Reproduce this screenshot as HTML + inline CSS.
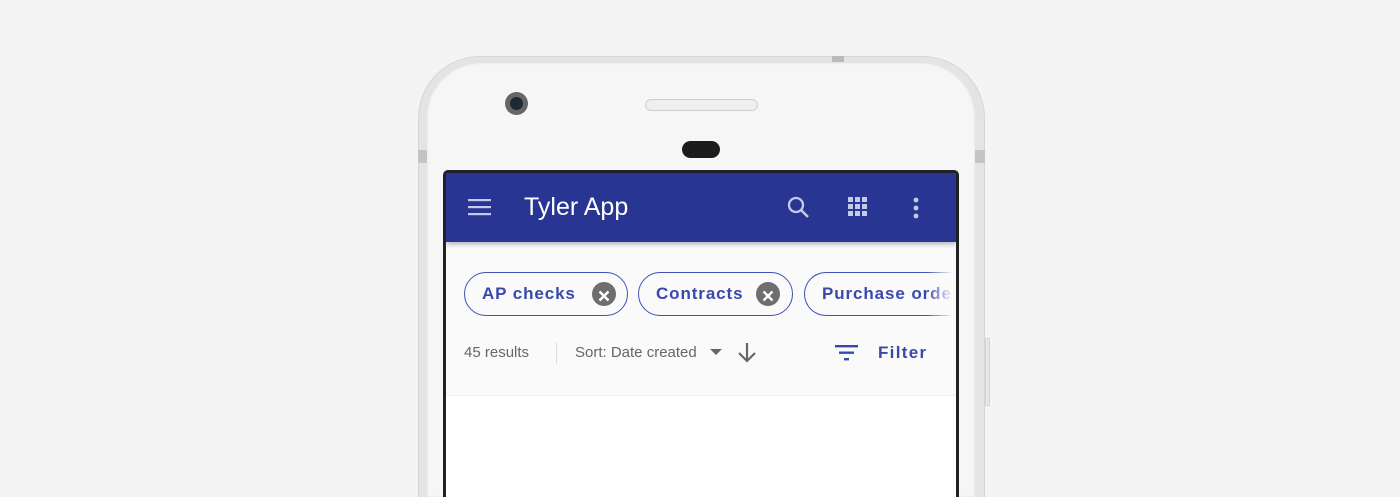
<!DOCTYPE html>
<html style="overflow:hidden;height:497px"><head><style>
*{margin:0;padding:0;box-sizing:border-box}
body{width:1400px;height:497px;background:#f4f4f4;position:relative;overflow:hidden;font-family:"Liberation Sans",Arial,sans-serif}
.abs{position:absolute}
.phone{left:418px;top:56px;width:567px;height:441px;border-radius:62px 62px 0 0;background:#e4e4e4;border:1px solid #d6d6d6;border-bottom:none}
.face{left:427px;top:63px;width:548px;height:434px;border-radius:54px 54px 0 0;background:#f6f6f6;box-shadow:inset 0 0 2px #ddd}
.screen{left:443px;top:170px;width:516px;height:327px;background:#222;border-radius:5px 5px 0 0}
.inner{left:446px;top:173px;width:510px;height:324px;background:#fff;overflow:hidden}
.bar{left:0;top:0;width:510px;height:69px;background:#283593;box-shadow:0 2px 5px rgba(0,0,0,.3);z-index:2}
.grey{left:0;top:69px;width:510px;height:154px;background:#fafafa;border-bottom:1px solid #eee}
.chip{top:30px;height:44px;border:1.5px solid #3f51b5;border-radius:22px;color:#3949ab;font-size:17px;font-weight:bold;letter-spacing:0.9px;line-height:41px;padding-left:17px;white-space:nowrap}
.x{position:absolute;top:9px;width:24px;height:24px;border-radius:50%;background:#6e6e6e}
</style></head><body>
<div class="abs phone"></div>
<div class="abs" style="left:832px;top:56px;width:12px;height:6px;background:#bbb"></div>
<div class="abs" style="left:418px;top:150px;width:10px;height:13px;background:#c4c4c4"></div>
<div class="abs" style="left:975px;top:150px;width:10px;height:13px;background:#c4c4c4"></div>
<div class="abs" style="left:985px;top:338px;width:5px;height:68px;background:#e8e8e8;border:1px solid #d4d4d4"></div>
<div class="abs face"></div>
<div class="abs" style="left:505px;top:92px;width:23px;height:23px;border-radius:50%;background:#666"><div class="abs" style="left:5px;top:5px;width:13px;height:13px;border-radius:50%;background:#1d2a33"></div></div>
<div class="abs" style="left:645px;top:99px;width:113px;height:12px;border-radius:6px;background:#efefef;border:1px solid #d0d0d0"></div>
<div class="abs" style="left:682px;top:141px;width:38px;height:17px;border-radius:9px;background:#1c1c1c"></div>
<div class="abs screen"></div>
<div class="abs inner">
 <div class="abs bar">
  <svg class="abs" style="left:22px;top:24px" width="24" height="20"><g fill="#c5cae9"><rect x="0" y="2" width="23" height="2.2"/><rect x="0" y="9" width="23" height="2.2"/><rect x="0" y="16" width="23" height="2.2"/></g></svg>
  <div class="abs" style="left:78px;top:20px;color:#fff;font-size:25px;">Tyler App</div>
  <svg class="abs" style="left:340px;top:22px" width="26" height="26"><circle cx="10" cy="10" r="7" fill="none" stroke="#c5cae9" stroke-width="2.3"/><path d="M15 15l7 7" stroke="#c5cae9" stroke-width="2.5"/></svg>
  <svg class="abs" style="left:402px;top:24px" width="20" height="20"><g fill="#c5cae9"><rect x="0" y="0" width="5" height="5"/><rect x="7" y="0" width="5" height="5"/><rect x="14" y="0" width="5" height="5"/><rect x="0" y="7" width="5" height="5"/><rect x="7" y="7" width="5" height="5"/><rect x="14" y="7" width="5" height="5"/><rect x="0" y="14" width="5" height="5"/><rect x="7" y="14" width="5" height="5"/><rect x="14" y="14" width="5" height="5"/></g></svg>
  <svg class="abs" style="left:466px;top:24px" width="8" height="22"><g fill="#c5cae9"><circle cx="4" cy="3" r="2.4"/><circle cx="4" cy="11" r="2.4"/><circle cx="4" cy="19" r="2.4"/></g></svg>
 </div>
 <div class="abs grey">
  <div class="abs chip" style="left:18px;width:164px">AP checks<span class="x" style="left:127px"><svg width="24" height="24"><path d="M7.5 7.5l9 9M16.5 7.5l-9 9" stroke="#fff" stroke-width="2.4"/></svg></span></div>
  <div class="abs chip" style="left:192px;width:155px">Contracts<span class="x" style="left:117px"><svg width="24" height="24"><path d="M7.5 7.5l9 9M16.5 7.5l-9 9" stroke="#fff" stroke-width="2.4"/></svg></span></div>
  <div class="abs chip" style="left:358px;width:200px;border-right:none;border-radius:22px 0 0 22px">Purchase orders</div>
  <div class="abs" style="left:480px;top:26px;width:30px;height:52px;background:linear-gradient(to right,rgba(250,250,250,0),#fafafa 90%)"></div>
  <div class="abs" style="left:18px;top:102px;font-size:15px;color:#666">45 results</div>
  <div class="abs" style="left:110px;top:100px;width:1px;height:22px;background:#ddd"></div>
  <div class="abs" style="left:129px;top:102px;font-size:15px;color:#666">Sort: Date created</div>
  <svg class="abs" style="left:264px;top:107px" width="14" height="8"><path d="M0 0h12l-6 6z" fill="#666"/></svg>
  <svg class="abs" style="left:290px;top:100px" width="22" height="22"><path d="M11 1v18M3 11l8 8 8-8" fill="none" stroke="#666" stroke-width="2.2"/></svg>
  <svg class="abs" style="left:389px;top:103px" width="24" height="16"><g fill="#3949ab"><rect x="0" y="0" width="23" height="2.4"/><rect x="4" y="6.5" width="15" height="2.4"/><rect x="9" y="13" width="5" height="2.4"/></g></svg>
  <div class="abs" style="left:432px;top:101px;font-size:17px;font-weight:bold;letter-spacing:1.3px;color:#3949ab">Filter</div>
 </div>
</div>
</body></html>
